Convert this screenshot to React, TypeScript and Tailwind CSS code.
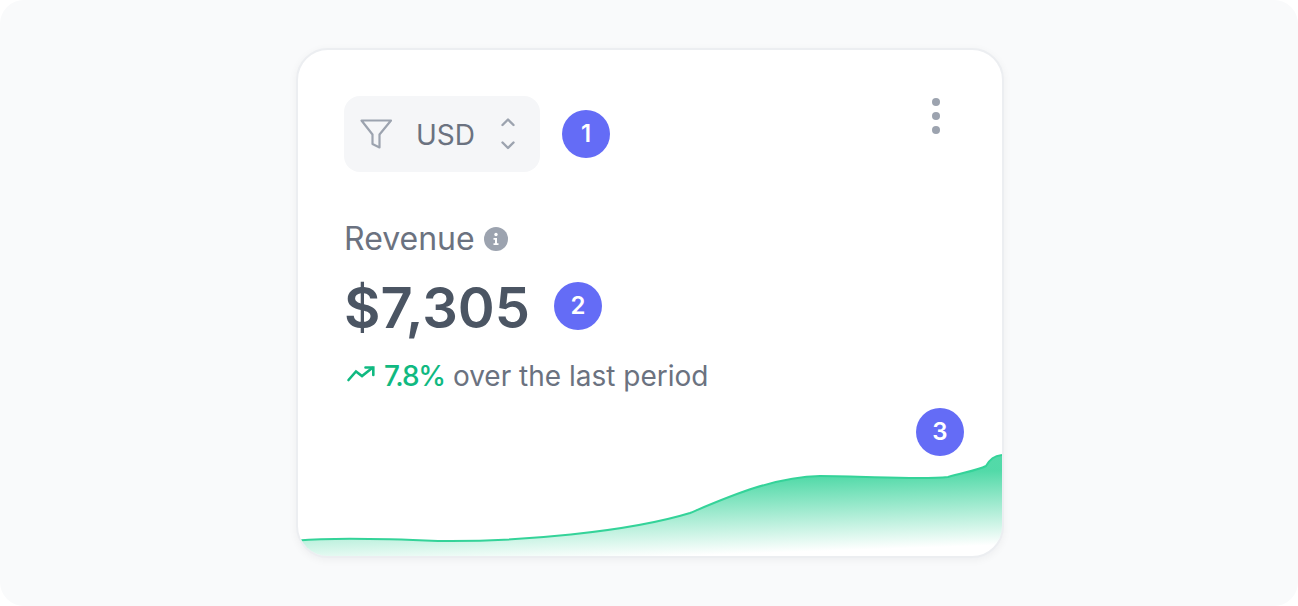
function Badge({ n, className = "" }: { n: number; className?: string }) {
  return (
    <div className={`flex h-12 w-12 shrink-0 items-center justify-center rounded-full bg-[#646cf6] text-2xl font-semibold text-white ${className}`}>
      {n}
    </div>
  );
}

const curve =
  "M0 90.5C30 88 80 88.5 140 91C220 92 330 82 392 63C430 47 475 27 522 26C570 26 620 30 650 27C668 22 680 20 688 16C692 9 696 6 704 5";

export default function App() {
  return (
    <div className="h-[606px] w-[1298px] bg-white font-['Inter',sans-serif]">
      <div className="flex h-full w-full justify-center rounded-3xl bg-[#f9fafb] pl-[2px] pt-12">
        <div className="relative flex h-[510px] w-[708px] flex-col overflow-hidden rounded-[32px] border-2 border-[#eceef1] bg-white shadow-[0_2px_8px_rgba(17,24,39,0.05)]">
          <div className="flex items-start justify-between pl-[46px] pr-[62px] pt-[46px]">
            <div className="flex items-center">
              <div className="flex h-[76px] w-[196px] items-center rounded-2xl bg-[#f5f6f8] pl-[15px]">
                <svg width="34" height="34" viewBox="0 0 34 34" fill="none" stroke="#9ca3af" strokeWidth="2.2" strokeLinejoin="round" strokeLinecap="round">
                  <path d="M2.5 3.5H32L20.5 17.5V30.5L13.5 27V17.5L2.5 3.5Z" />
                </svg>
                <span className="ml-[23px] mt-[2px] text-[28px] leading-none text-[#6b7280]">USD</span>
                <svg className="ml-[24px]" width="18" height="36" viewBox="0 0 18 36" fill="none" stroke="#9ca3af" strokeWidth="2.4" strokeLinecap="round" strokeLinejoin="round">
                  <path d="M3.5 9L9 3.5L14.5 9" />
                  <path d="M3.5 26.5L9 32L14.5 26.5" />
                </svg>
              </div>
              <Badge n={1} className="ml-[22px]" />
            </div>
            <div className="mt-[2px] flex flex-col gap-[6px]">
              <span className="h-2 w-2 rounded-full bg-[#9ca3af]" />
              <span className="h-2 w-2 rounded-full bg-[#9ca3af]" />
              <span className="h-2 w-2 rounded-full bg-[#9ca3af]" />
            </div>
          </div>

          <div className="mt-[47px] flex items-center pl-[46px]">
            <span className="text-[32px] leading-10 text-[#6b7280]">Revenue</span>
            <svg className="ml-[9px]" width="24" height="24" viewBox="0 0 24 24">
              <circle cx="12" cy="12" r="12" fill="#9ca3af" />
              <circle cx="12" cy="7.5" r="1.7" fill="#ffffff" />
              <path d="M9.5 11H13V16.2H14.5V18H9.5V16.2H11V12.8H9.5V11Z" fill="#ffffff" />
            </svg>
          </div>

          <div className="mt-[19px] flex items-center pl-[46px]">
            <span className="text-[56px] font-semibold leading-[60px] text-[#4b5563]">$7,305</span>
            <Badge n={2} className="mb-[4px] ml-[24px]" />
          </div>

          <div className="mt-[20px] flex items-center pl-[49px] text-[28px] leading-9">
            <svg className="overflow-visible" width="28" height="20" viewBox="0 0 28 20" fill="none" stroke="#10b981" strokeWidth="2.6" strokeLinecap="round" strokeLinejoin="miter">
              <path d="M1.5 14L9 5.5L15 10L25.5 1.8" />
              <path d="M18.5 1.5H26.3V9" />
            </svg>
            <span className="ml-[9px] font-medium tracking-[-1.2px] text-[#10b981]">7.8%</span>
            <span className="ml-[8px] text-[#6b7280]">over the last period</span>
          </div>

          <Badge n={3} className="absolute right-[38px] top-[358px]" />

          <svg className="mt-auto block w-full" height="106" viewBox="0 0 704 106">
            <defs>
              <linearGradient id="revenueFill" gradientUnits="userSpaceOnUse" x1="700" y1="20.6" x2="702.5" y2="95">
                <stop offset="0" stopColor="#34d399" stopOpacity="0.85" />
                <stop offset="1" stopColor="#34d399" stopOpacity="0" />
              </linearGradient>
            </defs>
            <path d={`${curve}L704 106L0 106Z`} fill="url(#revenueFill)" />
            <path d={curve} fill="none" stroke="#34d399" strokeWidth="2" />
          </svg>
        </div>
      </div>
    </div>
  );
}
